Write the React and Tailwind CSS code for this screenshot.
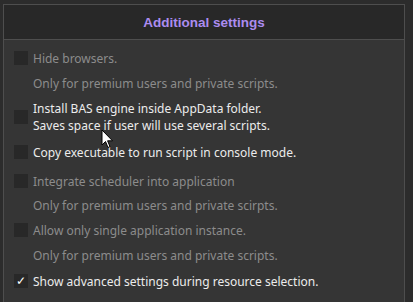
import React from "react";

const notes = "text-[#8c8c8c]";

const Box = ({ checked }) => (
  <div className="w-[14px] h-[14px] shrink-0 bg-[#282828] flex items-center justify-center text-[12px] leading-none text-white">
    {checked ? "✓" : null}
  </div>
);

const Option = ({ children, enabled, checked, className = "" }) => (
  <div className={`flex items-center gap-[5px] pl-[10px] ${className}`}>
    <Box checked={checked} />
    <div className={enabled ? "text-[#ececec]" : notes}>{children}</div>
  </div>
);

const Note = ({ children, className = "" }) => (
  <div className={`pl-[29px] flex items-center ${notes} ${className}`}>{children}</div>
);

const Cursor = () => (
  <svg
    className="absolute left-[97px] top-[124px]"
    width="13"
    height="20"
    viewBox="0 0 13 20"
  >
    <path
      d="M1 1 L1 16 L4.5 12.5 L7 18.5 L9 17.6 L6.6 11.8 L11.5 11.8 Z"
      fill="#ffffff"
      stroke="#000000"
      strokeWidth="1"
      strokeLinejoin="round"
    />
  </svg>
);

export default function App() {
  return (
    <div
      className="w-[413px] h-[302px] bg-[#2c2c2c] pt-[4px] pl-[3px] pr-[8px] overflow-hidden"
      style={{ fontFamily: '"Noto Sans", "Liberation Sans", sans-serif' }}
    >
      <div className="relative h-full bg-[#353535] border-t border-l border-r border-[#4e4e4e] text-[12px] leading-[17px]">
        <div className="h-[35px] bg-[#282828] border-b border-[#4e4e4e] flex items-center justify-center">
          <span className="font-['Liberation_Sans',sans-serif] text-[13.5px] font-bold text-[#ac8cf0]">
            Additional settings
          </span>
        </div>

        <div>
          <Option className="h-[24px] mt-[6px]">Hide browsers.</Option>
          <Note className="h-[24px] mt-[1px]">Only for premium users and private scripts.</Note>
          <Option enabled className="h-[34px] mt-[5px]">
            <div>Install BAS engine inside AppData folder.</div>
            <div>Saves space if user will use several scripts.</div>
          </Option>
          <Option enabled className="h-[24px] mt-[6px]">Copy executable to run script in console mode.</Option>
          <Option className="h-[24px] mt-[5px]">Integrate scheduler into application</Option>
          <Note className="h-[24px]">Only for premium users and private scirpts.</Note>
          <Option className="h-[24px] mt-[1px]">Allow only single application instance.</Option>
          <Note className="h-[24px] mt-[1px]">Only for premium users and private scripts.</Note>
          <Option enabled checked className="h-[24px] mt-[2px]">
            Show advanced settings during resource selection.
          </Option>
        </div>

        <Cursor />
      </div>
    </div>
  );
}
